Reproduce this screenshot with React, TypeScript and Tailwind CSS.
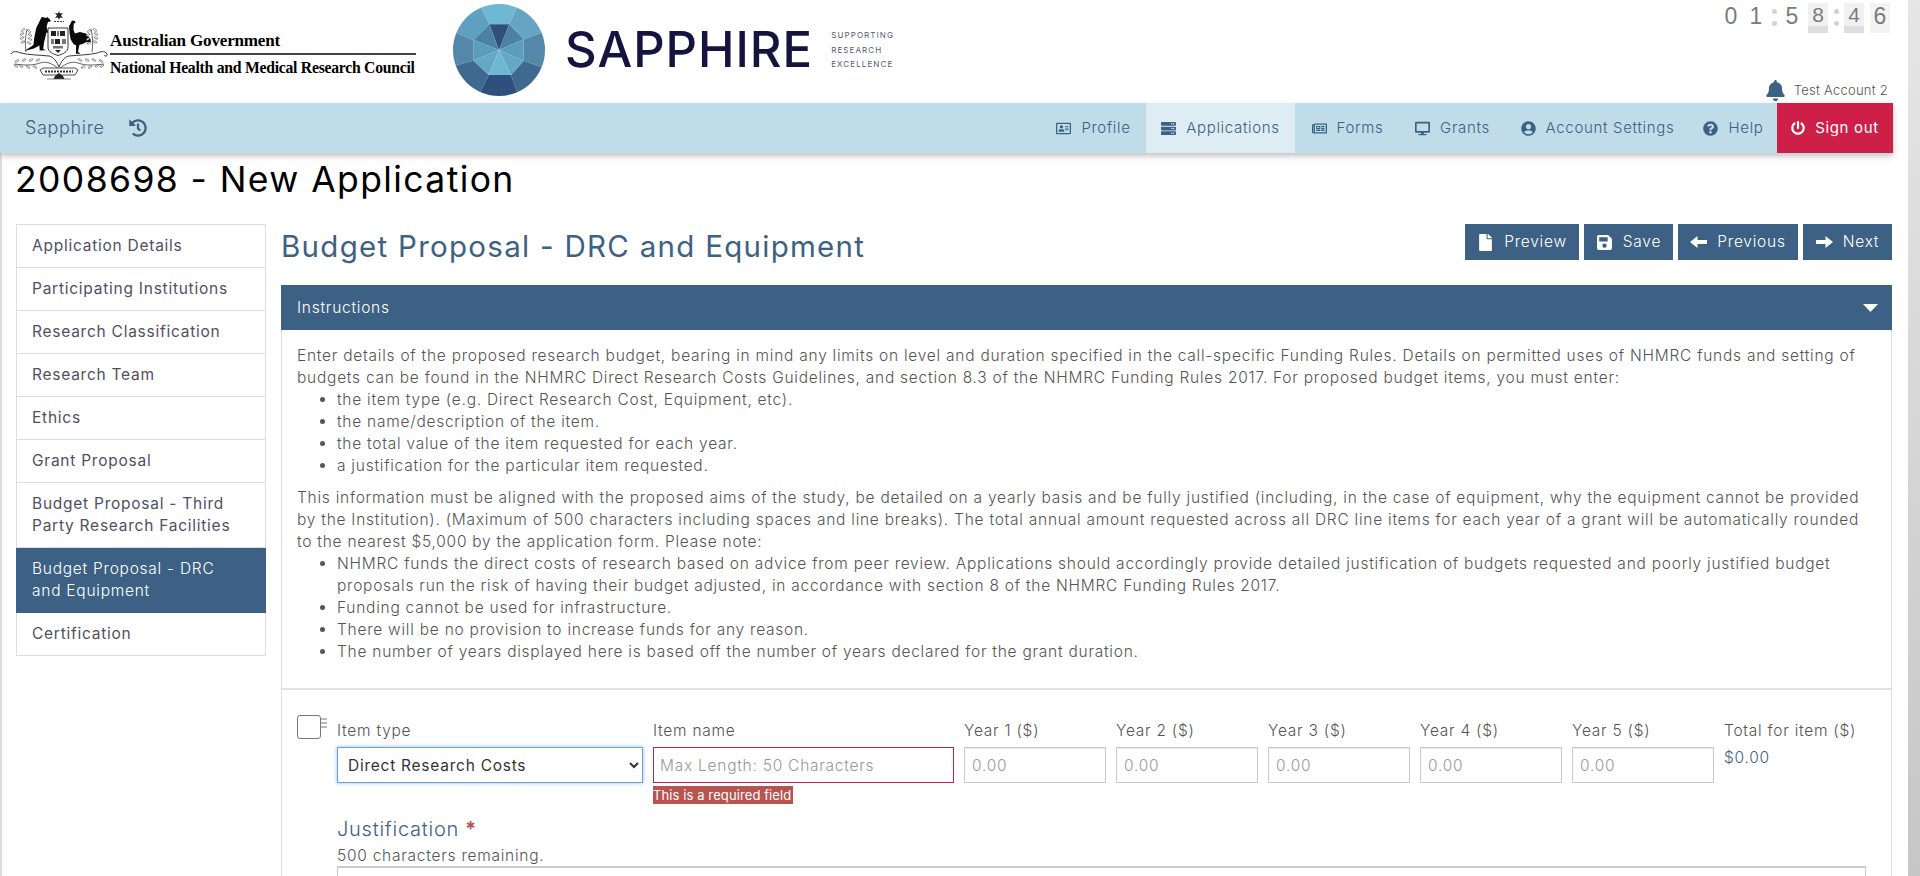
import React from "react";
import { FaRegAddressCard, FaServer, FaRegNewspaper, FaDesktop, FaUserCircle, FaQuestionCircle, FaPowerOff, FaHistory, FaBell, FaFile, FaSave } from "react-icons/fa";

const navItems = [
  { label: "Profile", Icon: FaRegAddressCard, cls: "w-[105px]", active: false },
  { label: "Applications", Icon: FaServer, cls: "w-[149px]", active: true },
  { label: "Forms", Icon: FaRegNewspaper, cls: "w-[105px]", active: false },
  { label: "Grants", Icon: FaDesktop, cls: "w-[105px]", active: false },
  { label: "Account Settings", Icon: FaUserCircle, cls: "w-[185px]", active: false },
  { label: "Help", Icon: FaQuestionCircle, cls: "w-[87px]", active: false },
];

const sideItems = [
  "Application Details",
  "Participating Institutions",
  "Research Classification",
  "Research Team",
  "Ethics",
  "Grant Proposal",
  "Budget Proposal - Third Party Research Facilities",
  "Budget Proposal - DRC and Equipment",
  "Certification",
];

function Gem() {
  const c = "176,150";
  const polys: [string, string][] = [
    ["123,25 100,-10 250,-10 228,25 207,73 147,73", "#6fb8d4"],
    ["123,25 100,-10 20,60 50,100 100,120 147,73", "#5f9fbf"],
    ["228,25 250,-10 330,60 300,100 250,118 207,73", "#65a5c3"],
    ["50,100 20,60 20,230 50,195 100,182 100,120", "#5487a8"],
    ["300,100 330,60 330,230 300,200 250,182 250,118", "#5487a8"],
    ["50,195 20,230 100,310 123,270 145,225 100,182", "#3f6a90"],
    ["300,200 330,230 250,310 228,270 212,225 250,182", "#3f6a90"],
    ["123,270 100,310 250,310 228,270 212,225 145,225", "#2f4f7c"],
    [`147,73 207,73 ${c}`, "#2f4f7c"],
    [`147,73 100,120 ${c}`, "#4c81a5"],
    [`207,73 250,118 ${c}`, "#4c81a5"],
    [`100,120 100,182 ${c}`, "#5b9dbd"],
    [`250,118 250,182 ${c}`, "#5b9dbd"],
    [`100,182 145,225 ${c}`, "#64a8c5"],
    [`250,182 212,225 ${c}`, "#64a8c5"],
    [`145,225 212,225 ${c}`, "#6fb8d4"],
  ];
  return (
    <svg width="92" height="92" viewBox="38 12 276 276" className="shrink-0">
      <defs>
        <clipPath id="gem">
          <circle cx="176" cy="150" r="138" />
        </clipPath>
      </defs>
      <g clipPath="url(#gem)">
        {polys.map(([p, f], i) => (
          <polygon key={i} points={p} fill={f} />
        ))}
      </g>
    </svg>
  );
}

function Spray({ d, leaves }: { d: string; leaves: [number, number, number][] }) {
  return (
    <g>
      <path d={d} fill="none" stroke="#222" strokeWidth="0.7" />
      {leaves.map(([x, y, r], i) => (
        <ellipse key={i} cx={x} cy={y} rx="2" ry="0.9" transform={`rotate(${r} ${x} ${y})`} fill="#fff" stroke="#333" strokeWidth="0.5" />
      ))}
    </g>
  );
}

function Crest() {
  return (
    <svg width="100" height="84" viewBox="8 6 100 84" className="shrink-0">
      <polygon points="59,11 60,13.5 63,13 61,15.5 63,18 60,17.5 59,20 58,17.5 55,18 57,15.5 55,13 58,13.5" fill="#222" />
      <path d="M54 21.5h10" stroke="#333" strokeWidth="1.2" strokeDasharray="2 1" />
      <path d="M47 18l.6-1.5 1 2 .7.3 1.7 2.4-3 .8-1.3 4 .3 4 3.4 2.2 .3 1-4.3-.8-1 4.5-1.4 5.5-.8 6.5 3 1.4-6.5 .2-.3-5-5.5 3-9.5 2.5 9-6 .8-7 2-10 3-6 2.5-5z" fill="#0a0a0a" />
      <path d="M72 20.5l3 .5.4 2-1.6 .6-.4 6 1.5 4 5-1.5 6 1.5 4.5 5.5 .6 4-4.5-1-4 2-3 .6-1.6 7 2.5 2h-4.5l.2-8.5-2.5-1-3-5-1-6-.6-7z" fill="#0a0a0a" />
      <path d="M48 28h20v19c0 5-5 7-10 8.500-5-1.500-10-3.500-10-8.500z" fill="#fff" stroke="#222" strokeWidth="0.9" />
      <path d="M51 31h5v5h-5zM60 31h5v5h-5zM55 39h5v5h-5z" fill="#222" />
      <path d="M57 31h2v5h-2zM51 39h3v5h-3zM62 39h4v5h-4zM53 46h10v2.500H53z" fill="#777" />
      <path d="M55 50h6l-3 3z" fill="#222" />
      <Spray d="M26 52c-1-8-1-14 1-23" leaves={[[23,30,-40],[29,31,40],[22,34,-30],[30,35,30],[22,38,-30],[30,39,30],[23,42,-20],[29,43,30]]} />
      <Spray d="M92 52c1-8 1-14-1-23" leaves={[[95,30,40],[89,31,-40],[96,34,30],[88,35,-30],[96,38,30],[88,39,-30],[95,42,20],[89,43,-30]]} />
      <path d="M11 54c2-4 7-2 10-1 8 2 18 2 28 3 5 1 8 6 10 11 2-5 5-10 10-11 10-1 20-1 28-3 3-1 8-3 10 1 1 2-2 3-3 1" fill="none" stroke="#222" strokeWidth="0.9" />
      <Spray d="M14 64c8 1 18 2 26-1 6-2 12 0 19 6" leaves={[[17,61,-30],[21,66,30],[24,60,-30],[28,67,30],[31,60,-30],[35,67,30],[38,60,-30],[16,66,30]]} />
      <Spray d="M104 64c-8 1-18 2-26-1-6-2-12 0-19 6" leaves={[[101,61,30],[97,66,-30],[94,60,30],[90,67,-30],[87,60,30],[83,67,-30],[80,60,30],[102,66,-30]]} />
      <path d="M40 70l3 -2h32l3 2-3 5H43z" fill="#fff" stroke="#222" strokeWidth="0.8" />
      <path d="M45 71.500h28" stroke="#333" strokeWidth="2" strokeDasharray="2 1" />
      <path d="M55 76l4-3 4 3 1.500 3h-11z" fill="#222" />
      <path d="M47 79h24" stroke="#555" strokeWidth="0.7" />
    </svg>
  );
}

function Arrow({ dir }: { dir: "l" | "r" }) {
  return (
    <svg width="17" height="12" viewBox="0 0 17 12" fill="#fff" className={dir === "r" ? "rotate-180 shrink-0" : "shrink-0"}>
      <path d="M0 6L7.500 0v4H17v4H7.500v4z" />
    </svg>
  );
}

function NotebookIcon() {
  return (
    <svg width="31" height="25" viewBox="0 0 31 25" className="shrink-0">
      <rect x="0.500" y="0.500" width="23" height="23" rx="2.500" fill="#fff" stroke="#777" strokeWidth="1" />
      <path d="M24 4h6M24 8h6M24 12h6" stroke="#777" strokeWidth="1.200" />
    </svg>
  );
}

function Clock() {
  const digit = "w-[20px] h-[30px] flex items-start justify-center leading-[27px]";
  const flip = "w-[20px] h-[30px] flex flex-col items-center bg-[#f1f1f1] leading-[23px]";
  const colon = (
    <span className="flex flex-col gap-[7px] w-[8px] mx-[4px] items-center pt-[6px]">
      <span className="w-[5px] h-[5px] rounded-full bg-[#d2d2d2]" />
      <span className="w-[5px] h-[5px] rounded-full bg-[#d2d2d2]" />
    </span>
  );
  return (
    <div className="flex items-start text-[23px] text-[#7b7b7b] font-['Liberation_Sans',sans-serif] tracking-normal font-normal mt-[3px] mr-[3px]">
      <span className={`${digit} mr-[5px]`}>0</span>
      <span className={digit}>1</span>
      {colon}
      <span className={`${digit} mr-[6px]`}>5</span>
      <span className={flip}>
        <span className="h-[23px] text-[21px]">8</span>
        <span className="h-[7px] w-full bg-[#dedede]" />
      </span>
      {colon}
      <span className={flip}>
        <span className="h-[23px] text-[21px]">4</span>
        <span className="h-[7px] w-full bg-[#dedede]" />
      </span>
      <span className={`${digit} bg-[#f4f4f4] ml-[6px]`}>6</span>
    </div>
  );
}

function Btn({ w, icon, label }: { w: string; icon: React.ReactNode; label: string }) {
  return (
    <button className={`${w} h-[36px] bg-[#3c6184] text-white flex items-center justify-center gap-[10px]`}>
      {icon}
      <span>{label}</span>
    </button>
  );
}

export default function App() {
  return (
    <div className="flex h-[876px] overflow-hidden bg-white text-[#555] font-[Inter,sans-serif] text-[15.500px] leading-[22px] tracking-[0.75px] font-light">
      <div className="w-[1908px] shrink-0 flex flex-col">
        <header className="h-[103px] flex shrink-0 pr-[15px]">
          <div className="ml-[8px] mt-[6px]">
            <Crest />
          </div>
          <div className="ml-[2px] mt-[28px] w-[306px] font-['Liberation_Serif',serif] font-bold text-black tracking-normal">
            <div className="text-[17.100px] leading-[26px] h-[25px] tracking-[-0.2px]">Australian Government</div>
            <div className="h-[2px] bg-[#444]" />
            <div className="text-[15.700px] leading-[24px] mt-[1px] tracking-[-0.25px] whitespace-nowrap">National Health and Medical Research Council</div>
          </div>
          <div className="ml-[37px] mt-[4px]">
            <Gem />
          </div>
          <div className="ml-[20px] mt-[21px] text-[49px] leading-[58px] font-medium text-[#15133f] tracking-[1px]">SAPPHIRE</div>
          <div className="ml-[18px] mt-[28px] text-[8px] leading-[14.500px] tracking-[1.1px] text-[#555a75] font-normal">
            <div>SUPPORTING</div>
            <div>RESEARCH</div>
            <div>EXCELLENCE</div>
          </div>
          <div className="ml-auto flex flex-col items-end justify-between pb-[2px]">
            <Clock />
            <div className="flex items-center gap-[8px] mr-[5px]">
              <FaBell className="text-[#3c6184] text-[21px]" />
              <span className="text-[13px] text-[#555] tracking-[0.25px]">Test Account 2</span>
            </div>
          </div>
        </header>

        <nav className="h-[50px] shrink-0 mr-[15px] bg-[#bfdce8] flex items-stretch text-[#3c6184] text-[15px] tracking-[0.68px] shadow-[0_3px_6px_rgba(0,0,0,0.25)] relative">
          <div className="flex items-center pl-[25px] gap-[24px]">
            <span className="text-[18px] tracking-[0.65px]">Sapphire</span>
            <FaHistory className="text-[18px]" />
          </div>
          <div className="ml-auto flex items-stretch">
            {navItems.map(({ label, Icon, cls, active }) => (
              <div key={label} className={`${cls} flex items-center justify-center gap-[10px] ${active ? "bg-[#deecf4]" : ""}`}>
                <Icon className="text-[15px] shrink-0" />
                <span>{label}</span>
              </div>
            ))}
            <div className="w-[116px] bg-[#ce1f48] text-white flex items-center justify-center gap-[10px] font-normal">
              <FaPowerOff className="text-[14px]" />
              <span>Sign out</span>
            </div>
          </div>
        </nav>

        <div className="flex-1 border-l-2 border-[#ddd] min-h-0">
          <h1 className="ml-[13px] mt-[7px] text-[35.500px] leading-[40px] font-normal text-black tracking-[1.4px]">2008698 - New Application</h1>
          <div className="flex items-start mt-[24px] ml-[14px] gap-[15px]">
            <aside className="w-[250px] shrink-0 border border-[#ddd] border-b-0">
              {sideItems.map((s) => {
                const active = s === "Budget Proposal - DRC and Equipment";
                return (
                  <div
                    key={s}
                    className={`py-[10px] border-b ${active ? "pl-[16px] pr-[26px] bg-[#3c6184] text-white border-[#3c6184] -mx-px" : "pl-[15px] pr-[25px] text-[#50505f] border-[#ddd] font-normal"}`}
                  >
                    {s}
                  </div>
                );
              })}
            </aside>

            <main className="w-[1611px] shrink-0">
              <div className="flex justify-between h-[36px] mb-[25px]">
                <h2 className="text-[29.500px] leading-[44px] font-normal text-[#3c6184] tracking-[1.28px]">Budget Proposal - DRC and Equipment</h2>
                <div className="flex gap-[5px]">
                  <Btn w="w-[114px]" icon={<FaFile className="text-[17px]" />} label="Preview" />
                  <Btn w="w-[89px]" icon={<FaSave className="text-[17px]" />} label="Save" />
                  <Btn w="w-[120px]" icon={<Arrow dir="l" />} label="Previous" />
                  <Btn w="w-[89px]" icon={<Arrow dir="r" />} label="Next" />
                </div>
              </div>

              <div className="h-[45px] bg-[#3c6184] text-white flex items-center justify-between pl-[16px] pr-[14px]">
                <span>Instructions</span>
                <svg width="15" height="8" viewBox="0 0 15 8" fill="#fff">
                  <path d="M0 0h15L7.500 8z" />
                </svg>
              </div>

              <div className="border-x border-[#ddd]">
                <div className="px-[15px] pt-[15px] pb-[25px] border-b-2 border-[#e2e2e2]">
                  <p>
                    Enter details of the proposed research budget, bearing in mind any limits on level and duration specified in the call-specific Funding Rules. Details on permitted uses of NHMRC funds and setting of budgets can be found in the NHMRC Direct Research Costs Guidelines, and section 8.3 of the NHMRC Funding Rules 2017. For proposed budget items, you must enter:
                  </p>
                  <ul className="list-disc pl-[40px]">
                    <li>the item type (e.g. Direct Research Cost, Equipment, etc).</li>
                    <li>the name/description of the item.</li>
                    <li>the total value of the item requested for each year.</li>
                    <li>a justification for the particular item requested.</li>
                  </ul>
                  <p className="mt-[10px]">
                    This information must be aligned with the proposed aims of the study, be detailed on a yearly basis and be fully justified (including, in the case of equipment, why the equipment cannot be provided by the Institution). (Maximum of 500 characters including spaces and line breaks). The total annual amount requested across all DRC line items for each year of a grant will be automatically rounded to the nearest $5,000 by the application form. Please note:
                  </p>
                  <ul className="list-disc pl-[40px]">
                    <li>NHMRC funds the direct costs of research based on advice from peer review. Applications should accordingly provide detailed justification of budgets requested and poorly justified budget proposals run the risk of having their budget adjusted, in accordance with section 8 of the NHMRC Funding Rules 2017.</li>
                    <li>Funding cannot be used for infrastructure.</li>
                    <li>There will be no provision to increase funds for any reason.</li>
                    <li>The number of years displayed here is based off the number of years declared for the grant duration.</li>
                  </ul>
                </div>

                <div className="flex pl-[15px] pt-[25px]">
                  <div className="w-[40px] shrink-0">
                    <NotebookIcon />
                  </div>
                  <div className="flex-1 pt-[5px]">
                    <div className="flex gap-[10px]">
                      <div className="w-[306px]">
                        <label className="block h-[22px] mb-[5px]">Item type</label>
                        <select className="w-full h-[36px] bg-white border border-[#6f9fe0] shadow-[0_0_4px_rgba(80,140,230,0.6)] pl-[6px] text-[#333] font-normal outline-none">
                          <option>Direct Research Costs</option>
                        </select>
                      </div>
                      <div className="w-[301px]">
                        <label className="block h-[22px] mb-[5px]">Item name</label>
                        <input placeholder="Max Length: 50 Characters" className="w-full h-[36px] border border-[#ce1f48] px-[6px] placeholder:text-[#999] outline-none" />
                        <div className="mt-[3px] w-[140px] h-[18px] bg-[#b75450] text-white text-[13px] leading-[18px] tracking-[0.1px] font-normal whitespace-nowrap">This is a required field</div>
                      </div>
                      {[1, 2, 3, 4, 5].map((n) => (
                        <div key={n} className="w-[142px]">
                          <label className="block h-[22px] mb-[5px]">Year {n} ($)</label>
                          <input placeholder="0.00" className="w-full h-[36px] border border-[#ccc] shadow-[inset_0_1px_1px_rgba(0,0,0,0.1)] px-[7px] placeholder:text-[#999] outline-none" />
                        </div>
                      ))}
                      <div>
                        <div className="h-[22px] mb-[5px] whitespace-nowrap">Total for item ($)</div>
                        <div className="text-[#3c6184]">$0.00</div>
                      </div>
                    </div>
                    <div className="mt-[11px] text-[20px] leading-[28px] text-[#3c6184] flex">
                      <span>Justification</span>
                      <span className="text-[#b75450] font-bold ml-[6px]">*</span>
                    </div>
                    <div className="mt-[2px] h-[21px]">500 characters remaining.</div>
                    <div className="mr-[25px] h-[60px] border border-[#ccc] border-t-2" />
                  </div>
                </div>
              </div>
            </main>
          </div>
        </div>
      </div>
      <div className="flex-1 bg-gradient-to-b from-[#e6e6e6] to-[#c6c6c6]" />
    </div>
  );
}
